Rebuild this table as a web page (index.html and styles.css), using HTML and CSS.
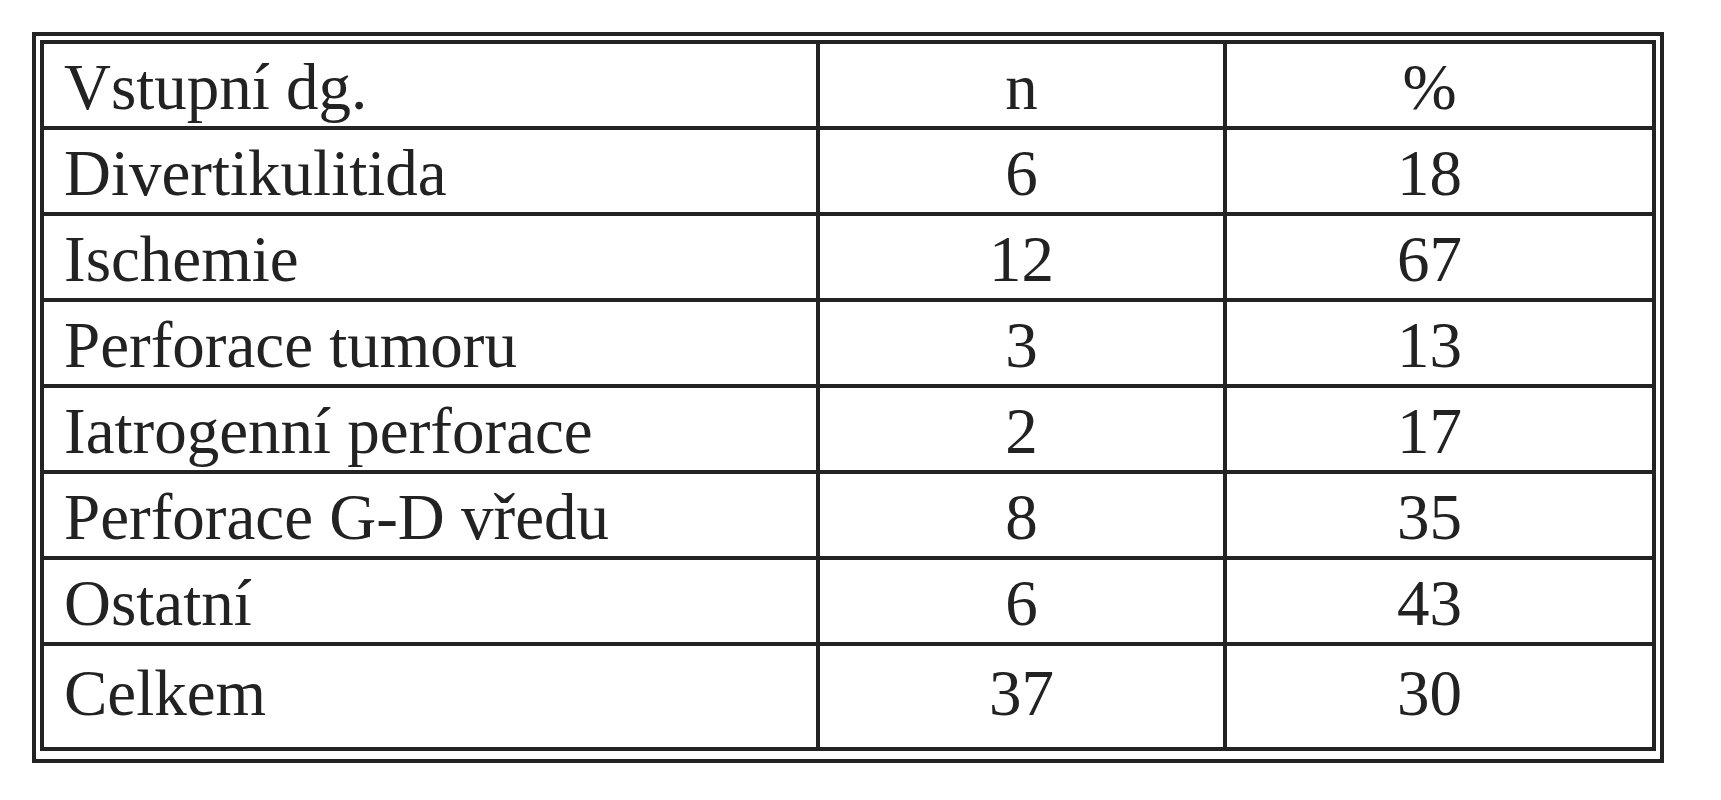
FILE: index.html
```html
<!DOCTYPE html>
<html lang="cs">
<head>
<meta charset="utf-8">
<title>Vstupní dg.</title>
<link rel="stylesheet" href="styles.css">
</head>
<body>
<div class="frame">
  <table class="data">
    <tr><td class="label">Vstupní dg.</td><td class="num">n</td><td class="pct">%</td></tr>
    <tr><td class="label">Divertikulitida</td><td class="num">6</td><td class="pct">18</td></tr>
    <tr><td class="label">Ischemie</td><td class="num">12</td><td class="pct">67</td></tr>
    <tr><td class="label">Perforace tumoru</td><td class="num">3</td><td class="pct">13</td></tr>
    <tr><td class="label">Iatrogenní perforace</td><td class="num">2</td><td class="pct">17</td></tr>
    <tr><td class="label">Perforace G-D vředu</td><td class="num">8</td><td class="pct">35</td></tr>
    <tr><td class="label">Ostatní</td><td class="num">6</td><td class="pct">43</td></tr>
    <tr class="last"><td class="label">Celkem</td><td class="num">37</td><td class="pct">30</td></tr>
  </table>
</div>
</body>
</html>
```
FILE: styles.css
```css
html, body {
  margin: 0;
  padding: 0;
  background: #ffffff;
}

body {
  padding: 32px;
  font-family: "Liberation Serif", "Times New Roman", serif;
  color: #222222;
}

.frame {
  width: 1632px;
  height: 731px;
  box-sizing: border-box;
  border: 4px solid #232323;
  padding: 4px;
}

.data {
  width: 1616px;
  border: 4px solid #232323;
  border-collapse: separate;
  border-spacing: 0;
  table-layout: fixed;
  box-sizing: border-box;
}

.data td {
  box-sizing: border-box;
  height: 86px;
  padding: 4px 0 0 0;
  border-right: 4px solid #232323;
  border-bottom: 4px solid #232323;
  font-size: 65px;
  line-height: 74px;
  vertical-align: middle;
  white-space: nowrap;
}

.data td.label {
  width: 776px;
  padding-left: 20px;
  text-align: left;
}

.data td.num {
  width: 407px;
  text-align: center;
}

.data td.pct {
  width: 425px;
  padding-right: 20px;
  text-align: center;
  border-right: none;
}

.data tr.last td {
  height: 101px;
  border-bottom: none;
  padding-top: 8px;
  padding-bottom: 15px;
}
```
